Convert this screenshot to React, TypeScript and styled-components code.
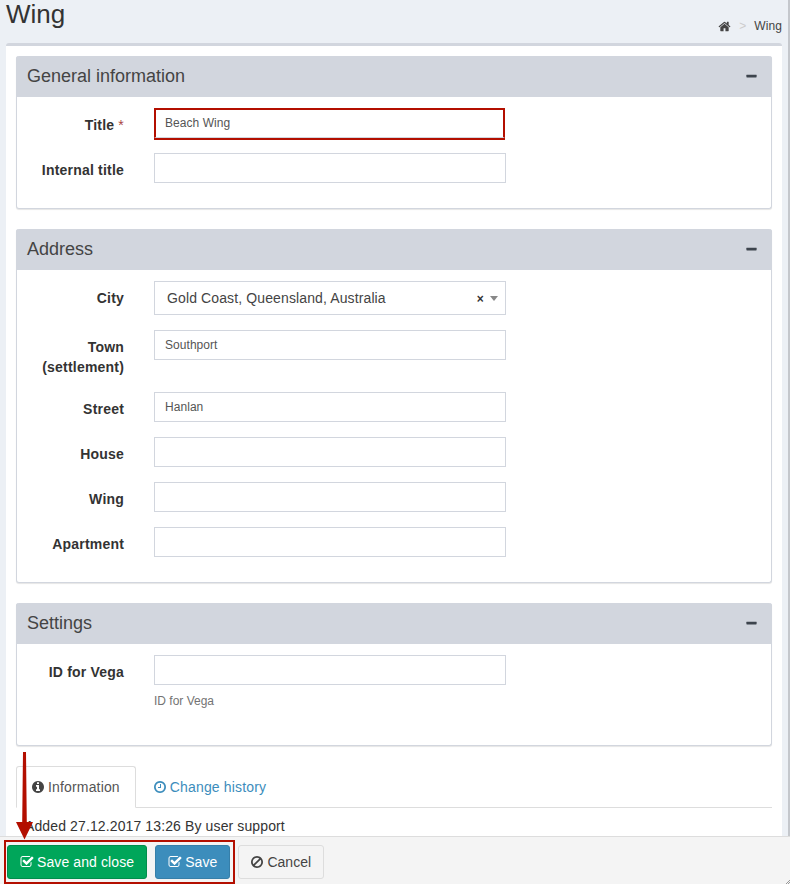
import React from "react";
import styled, { createGlobalStyle } from "styled-components";

const GlobalStyle = createGlobalStyle`
  html, body {
    margin: 0;
    padding: 0;
    height: 884px;
    overflow: hidden;
    background: #ecf0f5;
    font-family: "Liberation Sans", Arial, sans-serif;
    font-size: 14px;
    color: #333;
  }
  * { box-sizing: border-box; }
`;

const icons = {
  home: "M1472 992v480q0 26-19 45t-45 19h-384v-384h-256v384h-384q-26 0-45-19t-19-45v-480q0-1 .5-3t.5-3l575-474 575 474q1 2 1 6zm223-69l-62 74q-8 9-21 11h-3q-13 0-21-7l-692-577-692 577q-12 8-24 7-13-2-21-11l-62-74q-8-10-7-23.5t11-21.5l719-599q32-26 76-26t76 26l244 204v-195q0-14 9-23t23-9h192q14 0 23 9t9 23v408l219 182q10 8 11 21.5t-7 23.5z",
  minus: "M1600 736v192q0 40-28 68t-68 28h-1216q-40 0-68-28t-28-68v-192q0-40 28-68t68-28h1216q40 0 68 28t28 68z",
  info: "M1152 1376v-160q0-14-9-23t-23-9h-96v-512q0-14-9-23t-23-9h-320q-14 0-23 9t-9 23v160q0 14 9 23t23 9h96v320h-96q-14 0-23 9t-9 23v160q0 14 9 23t23 9h448q14 0 23-9t9-23zm-128-896v-160q0-14-9-23t-23-9h-192q-14 0-23 9t-9 23v160q0 14 9 23t23 9h192q14 0 23-9t9-23zm640 416q0 209-103 385.5t-279.5 279.5-385.5 103-385.5-103-279.5-279.5-103-385.5 103-385.5 279.5-279.5 385.5-103 385.5 103 279.5 279.5 103 385.5z",
  clock: "M1024 544v448q0 14-9 23t-23 9h-320q-14 0-23-9t-9-23v-64q0-14 9-23t23-9h224v-352q0-14 9-23t23-9h64q14 0 23 9t9 23zm416 352q0-148-73-273t-198-198-273-73-273 73-198 198-73 273 73 273 198 198 273 73 273-73 198-198 73-273zm224 0q0 209-103 385.5t-279.5 279.5-385.5 103-385.5-103-279.5-279.5-103-385.5 103-385.5 279.5-279.5 385.5-103 385.5 103 279.5 279.5 103 385.5z",
  check: "M1472 930v318q0 119-84.5 203.5t-203.5 84.5h-832q-119 0-203.5-84.5t-84.5-203.5v-832q0-119 84.5-203.5t203.5-84.5h832q63 0 117 25 15 7 18 23 3 17-9 29l-49 49q-10 10-23 10-3 0-9-2-23-6-45-6h-832q-66 0-113 47t-47 113v832q0 66 47 113t113 47h832q66 0 113-47t47-113v-254q0-13 9-22l64-64q10-10 23-10 6 0 12 3 20 8 20 29zm231-489l-814 814q-24 24-57 24t-57-24l-430-430q-24-24-24-57t24-57l110-110q24-24 57-24t57 24l263 263 647-647q24-24 57-24t57 24l110 110q24 24 24 57t-24 57z",
  ban: "M1440 893q0-161-87-295l-754 753q137 89 297 89 111 0 211.5-43.5t173.5-116.5 116-174.5 43-212.5zm-999 299l755-754q-135-91-300-91-148 0-273 73t-198 199-73 274q0 162 89 299zm1223-299q0 157-61 300t-163.5 246-245 164-298.5 61-298.5-61-245-164-163.5-246-61-300 61-299.5 163.5-245.5 245-164 298.5-61 298.5 61 245 164 163.5 245.5 61 299.5z",
};

const Icon = ({ name, size = 14 }: { name: keyof typeof icons; size?: number }) => (
  <svg width={size} height={size} viewBox="0 0 1792 1792" fill="currentColor">
    <path d={icons[name]} />
  </svg>
);

const Page = styled.div`
  position: relative;
  display: flex;
  flex-direction: column;
  width: 790px;
  height: 884px;
  overflow: hidden;
`;

const Content = styled.main`
  flex: 1;
  min-height: 0;
  overflow: hidden;
  padding: 0 6px;
  border-right: 2px solid #c4c7cc;
`;

const ContentHeader = styled.header`
  display: flex;
  justify-content: space-between;
  align-items: flex-end;
  height: 43px;
  padding-bottom: 10px;
`;

const PageTitle = styled.h1`
  align-self: flex-start;
  margin: -1px 0 0;
  font-size: 26px;
  font-weight: 400;
  line-height: 30px;
`;

const Breadcrumb = styled.div`
  display: flex;
  align-items: center;
  color: #444;
  font-size: 12px;
  letter-spacing: 0.1px;
`;

const Separator = styled.span`
  margin: 0 8px;
  color: #ccc;
`;

const Box = styled.section`
  min-height: 100%;
  padding: 10px 10px 0;
  background: #fff;
  border-top: 3px solid #d2d6de;
  border-radius: 3px 3px 0 0;
`;

const Panel = styled.div`
  margin-bottom: 20px;
  background: #fff;
  border: 1px solid #d2d6de;
  border-top: 0;
  border-radius: 3px;
  box-shadow: 0 1px 1px rgba(0, 0, 0, 0.1);
`;

const PanelHeader = styled.div`
  display: flex;
  justify-content: space-between;
  align-items: center;
  height: 41px;
  margin: 0 -1px;
  padding: 0 14px 1px 11px;
  background: #d2d6de;
  border-radius: 3px 3px 0 0;
  color: #444;
  font-size: 18px;
  svg {
    color: #3d444d;
  }
`;

const PanelBody = styled.div`
  padding: 11px 0 10px;
`;

const Row = styled.div`
  display: flex;
  margin-bottom: 15px;
`;

const Label = styled.label`
  flex: none;
  width: 107px;
  margin-right: 30px;
  padding-top: 7px;
  color: #333;
  font-weight: 700;
  letter-spacing: 0.2px;
  line-height: 20px;
  text-align: right;
`;

const Required = styled.span`
  color: #a94442;
  font-weight: 400;
`;

const Field = styled.div`
  width: 352px;
`;

const Input = styled.div`
  height: 30px;
  padding: 0 10px;
  background: #fff;
  border: 1px solid #d2d6de;
  color: #555;
  font-size: 12px;
  line-height: 28px;
  letter-spacing: 0.05px;
`;

const AlertInput = styled(Input)`
  width: 351px;
  padding-left: 9px;
  border: 2px solid #b30f00;
  border-bottom: 1px solid #d2d6de;
  box-shadow: 0 2px 0 #b30f00;
  line-height: 27px;
`;

const Select = styled.div`
  display: flex;
  align-items: center;
  height: 34px;
  padding: 0 7px 0 12px;
  background: #fff;
  border: 1px solid #d2d6de;
  color: #444;
  font-size: 14px;
  letter-spacing: 0.12px;
`;

const SelectValue = styled.span`
  flex: 1;
`;

const ClearMark = styled.span`
  margin: 2px 6px 0 0;
  color: #333;
  font-size: 12px;
  font-weight: 700;
`;

const Caret = styled.span`
  width: 0;
  height: 0;
  border-left: 4px solid transparent;
  border-right: 4px solid transparent;
  border-top: 5px solid #888;
`;

const HelpText = styled.div`
  margin: 8px 0 10px;
  color: #737373;
  font-size: 12px;
  line-height: 17px;
`;

const Tabs = styled.nav`
  display: flex;
  height: 42px;
  border-bottom: 1px solid #ddd;
`;

const Tab = styled.a<{ $active?: boolean }>`
  display: flex;
  align-items: center;
  gap: 3px;
  height: 42px;
  margin-right: 2px;
  padding: 0 15px 0 14px;
  background: ${(p) => (p.$active ? "#fff" : "transparent")};
  border: 1px solid ${(p) => (p.$active ? "#ddd" : "transparent")};
  border-bottom-color: ${(p) => (p.$active ? "#fff" : "transparent")};
  border-radius: 3px 3px 0 0;
  color: ${(p) => (p.$active ? "#555" : "#3c8dbc")};
  letter-spacing: 0.16px;
  svg {
    color: ${(p) => (p.$active ? "#444" : "#3c8dbc")};
  }
`;

const TabPane = styled.div`
  padding: 8px 9px 0;
  letter-spacing: 0.12px;
  line-height: 20px;
`;

const Footer = styled.footer`
  flex: none;
  display: flex;
  gap: 8px;
  height: 48px;
  padding: 8px 7px 0;
  background: #f4f4f4;
  border-top: 1px solid #ddd;
`;

const Button = styled.button<{ $bg: string; $border: string; $color: string }>`
  display: flex;
  align-items: center;
  gap: 3px;
  height: 34px;
  padding: 0 12px;
  background: ${(p) => p.$bg};
  border: 1px solid ${(p) => p.$border};
  border-radius: 3px;
  color: ${(p) => p.$color};
  font-family: inherit;
  font-size: 14px;
  letter-spacing: 0.1px;
`;

const CancelButton = styled(Button)`
  padding-left: 11px;
  letter-spacing: 0;
`;

const FooterMark = styled.div`
  position: absolute;
  left: 4px;
  top: 840px;
  width: 231px;
  height: 44px;
  border: 2px solid #b30f00;
`;

const Arrow = styled.svg`
  position: absolute;
  left: 16px;
  top: 752px;
`;

const ResizeGrip = styled.svg`
  position: absolute;
  right: 0;
  bottom: 0;
`;

const fields = [
  { label: "Town", extra: "(settlement)", value: "Southport" },
  { label: "Street", value: "Hanlan" },
  { label: "House", value: "" },
  { label: "Wing", value: "" },
  { label: "Apartment", value: "" },
];

export default function App() {
  return (
    <Page>
      <GlobalStyle />
      <Content>
        <ContentHeader>
          <PageTitle>Wing</PageTitle>
          <Breadcrumb>
            <Icon name="home" size={13} />
            <Separator>&gt;</Separator>
            Wing
          </Breadcrumb>
        </ContentHeader>
        <Box>
          <Panel>
            <PanelHeader>
              General information
              <Icon name="minus" size={13} />
            </PanelHeader>
            <PanelBody>
              <Row>
                <Label>
                  Title <Required>*</Required>
                </Label>
                <Field>
                  <AlertInput>Beach Wing</AlertInput>
                </Field>
              </Row>
              <Row>
                <Label>Internal title</Label>
                <Field>
                  <Input />
                </Field>
              </Row>
            </PanelBody>
          </Panel>

          <Panel>
            <PanelHeader>
              Address
              <Icon name="minus" size={13} />
            </PanelHeader>
            <PanelBody>
              <Row>
                <Label>City</Label>
                <Field>
                  <Select>
                    <SelectValue>Gold Coast, Queensland, Australia</SelectValue>
                    <ClearMark>×</ClearMark>
                    <Caret />
                  </Select>
                </Field>
              </Row>
              {fields.map((f) => (
                <Row key={f.label}>
                  <Label>
                    {f.label}
                    {f.extra && <br />}
                    {f.extra}
                  </Label>
                  <Field>
                    <Input>{f.value}</Input>
                  </Field>
                </Row>
              ))}
            </PanelBody>
          </Panel>

          <Panel>
            <PanelHeader>
              Settings
              <Icon name="minus" size={13} />
            </PanelHeader>
            <PanelBody>
              <Row>
                <Label>ID for Vega</Label>
                <Field>
                  <Input />
                  <HelpText>ID for Vega</HelpText>
                </Field>
              </Row>
            </PanelBody>
          </Panel>

          <Tabs>
            <Tab $active>
              <Icon name="info" />
              Information
            </Tab>
            <Tab>
              <Icon name="clock" />
              Change history
            </Tab>
          </Tabs>
          <TabPane>Added 27.12.2017 13:26 By user support</TabPane>
        </Box>
      </Content>
      <Footer>
        <Button $bg="#00a65a" $border="#008d4c" $color="#fff">
          <Icon name="check" />
          Save and close
        </Button>
        <Button $bg="#3c8dbc" $border="#367fa9" $color="#fff">
          <Icon name="check" />
          Save
        </Button>
        <CancelButton $bg="#f4f4f4" $border="#ddd" $color="#444">
          <Icon name="ban" />
          Cancel
        </CancelButton>
      </Footer>
      <FooterMark />
      <Arrow width="17" height="88" viewBox="0 0 17 88">
        <path d="M7 0h3l.8 70h6.200l-8.500 17.500L0 70h6.200z" fill="#b30f00" />
      </Arrow>
      <ResizeGrip width="4" height="4" viewBox="0 0 4 4">
        <path d="M0 4L4 0M2 4l2-2" stroke="#999" strokeWidth="1" />
      </ResizeGrip>
    </Page>
  );
}
